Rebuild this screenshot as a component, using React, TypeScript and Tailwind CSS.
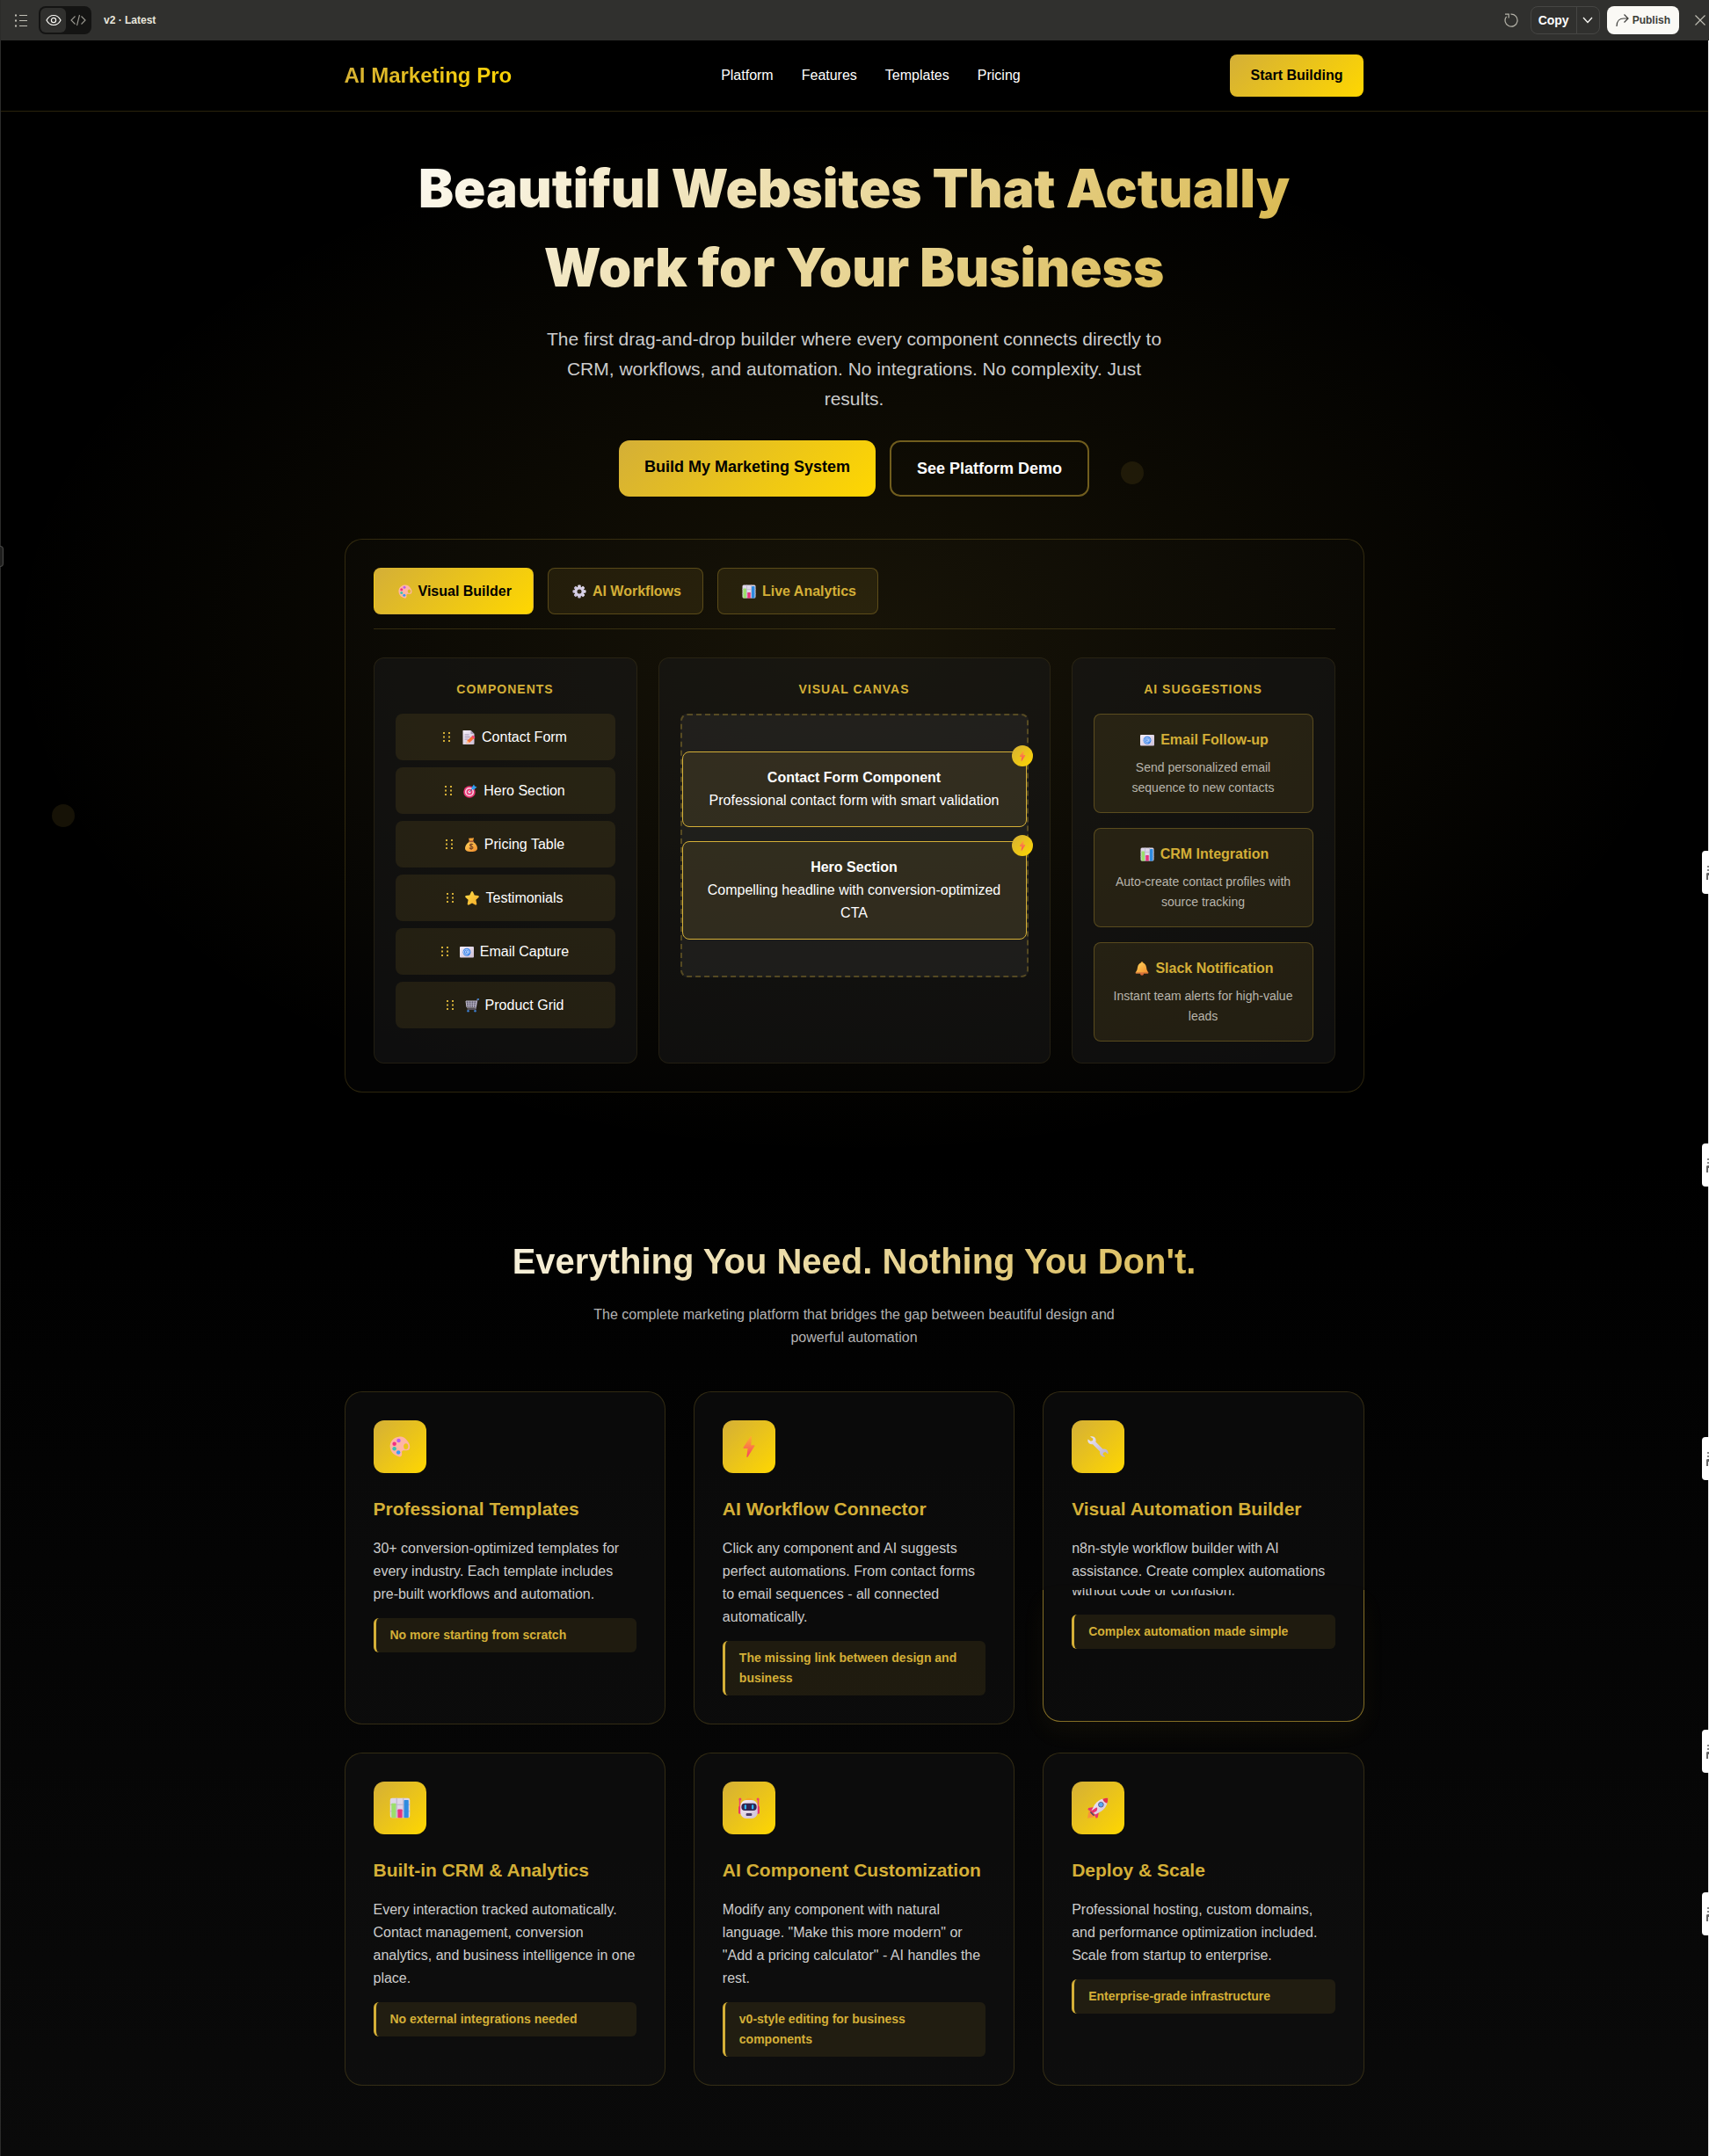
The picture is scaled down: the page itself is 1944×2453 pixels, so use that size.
import React from "react";

type IconProps = { className?: string };

function Defs() {
  return (
    <svg width="0" height="0" className="absolute" aria-hidden="true">
      <defs>
        <linearGradient id="bolt" x1="0" y1="0" x2="0" y2="1">
          <stop offset="0" stopColor="#ffb02e" />
          <stop offset="1" stopColor="#f8435f" />
        </linearGradient>
        <linearGradient id="paper" x1="0" y1="0" x2="1" y2="1">
          <stop offset="0" stopColor="#f5eef8" />
          <stop offset="1" stopColor="#cdbfd6" />
        </linearGradient>
        <linearGradient id="steel" x1="0" y1="0" x2="1" y2="1">
          <stop offset="0" stopColor="#ece6f5" />
          <stop offset="1" stopColor="#b9aecb" />
        </linearGradient>
        <linearGradient id="amber" x1="0" y1="0" x2="1" y2="1">
          <stop offset="0" stopColor="#ffd45c" />
          <stop offset="1" stopColor="#f28b2c" />
        </linearGradient>
        <linearGradient id="starfill" x1="0" y1="0" x2="1" y2="1">
          <stop offset="0" stopColor="#ffe04a" />
          <stop offset="1" stopColor="#f3a928" />
        </linearGradient>
      </defs>
    </svg>
  );
}

function Art({ className = "size-4", children }: IconProps & { children: React.ReactNode }) {
  return (
    <svg viewBox="0 0 32 32" className={className} aria-hidden="true" fill="none">
      {children}
    </svg>
  );
}

const Palette = (p: IconProps) => (
  <Art {...p}>
    <path
      fillRule="evenodd"
      d="M14 1C6 2 0 9 1 17c1 8 7 12 13 14 3 1 5-1 5-4 0-2-1-4 1-5 3-1 7 1 10-2 2-3 1-9-3-13C24 2 19 0 14 1Zm11 10c2 0 3.500 2 3.500 4.500S27 20 25 20s-3.500-2-3.500-4.500S23 11 25 11Z"
      fill="#ffb5a5"
    />
    <circle cx="14" cy="6.500" r="3" fill="#b95df0" />
    <circle cx="7.500" cy="11.500" r="3" fill="#f02f83" />
    <circle cx="7.500" cy="19" r="3" fill="#3cc3b0" />
    <circle cx="13.500" cy="24.500" r="3" fill="#3b9bf5" />
  </Art>
);

const Gear = (p: IconProps) => (
  <Art {...p}>
    <g fill="url(#steel)">
      {[0, 45, 90, 135].map((a) => (
        <rect key={a} x="12.500" y="1" width="7" height="30" rx="2" transform={`rotate(${a} 16 16)`} />
      ))}
    </g>
    <circle cx="16" cy="16" r="8" stroke="#d6cfe4" strokeWidth="6" />
    <circle cx="16" cy="16" r="5" fill="#332a1c" />
  </Art>
);

const Chart = (p: IconProps) => (
  <Art {...p}>
    <rect x="1" y="1" width="30" height="30" rx="3" fill="#ddd6e8" />
    <path d="M1 11h30M1 21h30M11 1v30M21 1v30" stroke="#beb4cf" strokeWidth="1.500" />
    <rect x="3" y="9" width="7" height="22" rx="1" fill="#9be06a" />
    <rect x="12.500" y="18" width="7" height="13" rx="1" fill="#e8337c" />
    <rect x="22" y="4" width="7" height="27" rx="1" fill="#2f8be0" />
  </Art>
);

const Memo = (p: IconProps) => (
  <Art {...p}>
    <path d="M4 0h17l8 8v22a2 2 0 0 1-2 2H4a1 1 0 0 1-1-1V1a1 1 0 0 1 1-1Z" fill="url(#paper)" />
    <path d="M21 0l8 8h-7a1 1 0 0 1-1-1V0Z" fill="#a99bb8" />
    <path d="M7 10h10M7 15h12M7 20h8" stroke="#a598b5" strokeWidth="2" />
    <path d="M13 23 25 12l5 5-12 11-7 2 2-7Z" fill="#fb6d33" />
    <path d="m13 23 5 5-7 2 2-7Z" fill="#ffcfa0" />
    <path d="m23 14 3-3 5 5-3 3-5-5Z" fill="#f0427d" />
  </Art>
);

const Dart = (p: IconProps) => (
  <Art {...p}>
    <circle cx="14" cy="18" r="13.500" fill="#e73572" />
    <circle cx="14" cy="18" r="10" fill="#f7d8e5" />
    <circle cx="14" cy="18" r="7" fill="#e73572" />
    <circle cx="14" cy="18" r="3.500" fill="#f7d8e5" />
    <path d="m14 18 11-11" stroke="#4f6a92" strokeWidth="2" />
    <path d="m19 8 5-7 2 4 5 2-7 6-5-1V8Z" fill="#2f9df0" />
  </Art>
);

const MoneyBag = (p: IconProps) => (
  <Art {...p}>
    <path d="M10 1c2 2 4-1 6 0s4-1 6 0l-2 7h-8l-2-7Z" fill="#f7a336" />
    <path d="M12 9h8c6 4 10 10 10 15s-4 8-14 8S2 29 2 24 6 13 12 9Z" fill="url(#amber)" />
    <rect x="10" y="7" width="12" height="3.500" rx="1.700" fill="#a3583a" />
    <path d="M20 16c-1-2-7-2-7 1 0 4 7 2 7 6 0 3-7 3-8 0M16 13v15" stroke="#7a4526" strokeWidth="2.200" />
  </Art>
);

const Star = (p: IconProps) => (
  <Art {...p}>
    <path
      d="M14 1.500c1-2 3-2 4 0l3.500 7.500 8 1c2.200.300 3 2.500 1.300 4l-6 5.500 1.700 9c.400 2-1.500 3.500-3.400 2.500L16 27l-7.100 4c-1.900 1-3.800-.500-3.400-2.500l1.700-9-6-5.500c-1.700-1.500-.900-3.700 1.300-4l8-1L14 1.500Z"
      fill="url(#starfill)"
    />
  </Art>
);

const Email = (p: IconProps) => (
  <Art {...p}>
    <rect x="0" y="4" width="32" height="25" rx="2" fill="url(#paper)" />
    <circle cx="16" cy="16.500" r="9" fill="#3f86e8" />
    <circle cx="15.500" cy="16.500" r="2.800" stroke="#cfe0ff" strokeWidth="1.800" />
    <path d="M18.500 13.500v4c0 3 4 1.500 3.500-2-.700-4-5-5.500-8.500-4.500-5 1.500-6 8-2 10.500 2.500 1.500 5 1 7 0" stroke="#cfe0ff" strokeWidth="1.600" />
  </Art>
);

const Cart = (p: IconProps) => (
  <Art {...p}>
    <path d="M31 2h-3l-4 22H5" stroke="#8d86a0" strokeWidth="2.200" />
    <path d="M28 2h4" stroke="#3e86d8" strokeWidth="3" />
    <path d="M2 6h24l-2 14H4L2 6Z" fill="#4a4656" stroke="#d3cde0" strokeWidth="1.800" />
    <path d="M3 10.500h22M3 15h22M8 6l1 14M14 6v14M20 6l-1 14" stroke="#d3cde0" strokeWidth="1.500" />
    <circle cx="7" cy="28.500" r="2.500" fill="#3e7fd0" />
    <circle cx="23" cy="28.500" r="2.500" fill="#3e7fd0" />
  </Art>
);

const Bell = (p: IconProps) => (
  <Art {...p}>
    <ellipse cx="16" cy="28" rx="4" ry="3.500" fill="#d8673a" />
    <circle cx="16" cy="3" r="2.500" fill="#f2a93c" />
    <path d="M16 3c6 0 9 4 10 10 .800 5 1.500 8 4 11 1 1.500.500 3-1 3H3c-1.500 0-2-1.500-1-3 2.500-3 3.200-6 4-11C7 7 10 3 16 3Z" fill="url(#amber)" />
    <path d="M1.500 25h29v2h-29z" fill="#c4653c" />
  </Art>
);

const Bolt = (p: IconProps) => (
  <Art {...p}>
    <path d="M18 .500 7.500 17c-.500 1 0 1.500.800 1.500H14L12.500 31c0 1 .800 1.300 1.400.500L24.500 15c.500-.900 0-1.500-.800-1.500H19L20 1c0-1-1.300-1.500-2-.500Z" fill="url(#bolt)" />
  </Art>
);

const Wrench = (p: IconProps) => (
  <Art {...p}>
    <path
      d="M4 .800c3-1.300 6.500-.300 8 2.500 1 2 1 3.700.500 5.200L23.500 19.500c2-.500 4-.200 5.700 1.200 2 1.700 2.700 4.200 2 6.500l-4-3.200-3 1-.800 3 3.600 3c-2.500.800-5.300 0-7-2.300-1.200-1.700-1.500-3.600-1-5.400L8 12.300c-2 .500-4 0-5.500-1.300C.700 9.300 0 7 .800 4.500l4.200 3 3-1 .500-3L4 .800Z"
      fill="url(#steel)"
    />
  </Art>
);

const Robot = (p: IconProps) => (
  <Art {...p}>
    <path d="M2 3v19M30 3v19" stroke="#f0436d" strokeWidth="2" />
    <circle cx="2.500" cy="2.500" r="2" fill="#f0436d" />
    <circle cx="29.500" cy="2.500" r="2" fill="#f0436d" />
    <path d="M10 5c0-3 3-4 6-4s6 1 6 4H10Z" fill="#f5a623" />
    <rect x="0" y="13" width="5" height="12" rx="2" fill="#e8386a" />
    <rect x="27" y="13" width="5" height="12" rx="2" fill="#e8386a" />
    <rect x="3" y="4" width="26" height="28" rx="9" fill="url(#paper)" />
    <rect x="4.500" y="9" width="23" height="11" rx="5" fill="#32244f" />
    <rect x="9" y="11" width="3" height="7" rx="1.500" fill="#2fb5ff" />
    <rect x="20" y="11" width="3" height="7" rx="1.500" fill="#2fb5ff" />
    <rect x="11.500" y="24" width="9" height="4" rx="1.500" fill="#4a3a66" />
  </Art>
);

const Rocket = (p: IconProps) => (
  <Art {...p}>
    <path d="M2 21 0 31.500 10 30l1-6-6-4-3 1Z" fill="#f9923a" />
    <path d="M8 15 1.500 16l-1 2.500L7 22l6-7H8ZM17 24l-1.500 6.500-2.500 1L10 25l7-6v5Z" fill="#e8336d" />
    <path d="M31 1C22 1 15 5 11 11l-5 9 6 6 9-5c6-4 10-11 10-20Z" fill="url(#paper)" />
    <path d="M31 1c-3 0-5.500.300-8 1.200 1 3.500 3.300 5.800 6.800 6.800C30.700 6.500 31 4 31 1Z" fill="#e8343f" />
    <circle cx="20.500" cy="11" r="3.800" fill="#5aa7f2" stroke="#5b5480" strokeWidth="1.200" />
    <path d="m14 15-9 6 3 3 6-3.500L15 17l-1-2Z" fill="#e8336d" />
    <path d="m5 21 6 6-2 1-5-5 1-2Z" fill="#553b6a" />
  </Art>
);

function Emoji({ icon: Icon }: { icon: React.FC<IconProps> }) {
  return (
    <span className="inline-flex w-[22px] shrink-0 justify-center">
      <Icon className="size-4" />
    </span>
  );
}

function Grip() {
  return (
    <svg viewBox="0 0 8 11" className="mr-1.5 h-[11px] w-2 shrink-0" fill="#d4af37" aria-hidden="true">
      {[0, 4.5, 9].map((y) => (
        <React.Fragment key={y}>
          <rect x="0" y={y} width="2" height="2" />
          <rect x="6" y={y} width="2" height="2" />
        </React.Fragment>
      ))}
    </svg>
  );
}

const gold = "bg-[linear-gradient(135deg,#d4af37,#ffd700)]";

function Toolbar() {
  return (
    <header className="flex h-[46px] items-center bg-[#30302e] pl-4 pr-1 text-[#faf9f5]">
      <button type="button" aria-label="Versions list" className="mr-3">
        <svg viewBox="0 0 16 16" className="size-4" stroke="#c2c0b6" aria-hidden="true">
          <path d="M6 2.500h9M6 8.500h9M6 14.500h9" />
          <path d="M1 2.500h2M1 8.500h2M1 14.500h2" strokeWidth="2" />
        </svg>
      </button>
      <div className="flex h-8 w-[60px] items-center rounded-lg bg-[#141413] p-0.5">
        <button type="button" aria-label="Preview" className="flex h-7 w-[29px] items-center justify-center rounded-md bg-[#30302e]">
          <svg viewBox="0 0 18 14" className="h-3.5 w-[18px]" fill="none" stroke="#faf9f5" strokeWidth="1.200" aria-hidden="true">
            <path d="M1 7c2-4 5-5.500 8-5.500S15 3 17 7c-2 4-5 5.500-8 5.500S3 11 1 7Z" />
            <circle cx="9" cy="7" r="2.600" />
          </svg>
        </button>
        <button type="button" aria-label="Code" className="flex h-7 flex-1 items-center justify-center">
          <svg viewBox="0 0 18 14" className="h-3.5 w-[18px]" fill="none" stroke="#9c9a92" strokeWidth="1.100" aria-hidden="true">
            <path d="M5.500 2.500 1 7l4.500 4.500M12.500 2.500 17 7l-4.500 4.500M10.500 1l-3 12" />
          </svg>
        </button>
      </div>
      <span className="ml-3.5 text-xs font-bold text-[#e8e6dc]">v2 · Latest</span>
      <div className="ml-auto flex items-center">
        <button type="button" aria-label="Refresh" className="mr-3.5">
          <svg viewBox="0 0 16 16" className="size-4" fill="none" stroke="#b5b3a9" strokeWidth="1.200" aria-hidden="true">
            <path d="M7.500 1.200A7 7 0 1 1 2.600 3.800M1 1.200h4.200v4.300" />
          </svg>
        </button>
        <div className="flex h-8 items-stretch rounded-lg border border-[#464644]">
          <button type="button" className="px-2 text-sm font-bold text-white">Copy</button>
          <button type="button" aria-label="Copy options" className="flex w-[26px] items-center justify-center border-l border-[#464644]">
            <svg viewBox="0 0 12 8" className="h-2 w-3" fill="none" stroke="#faf9f5" strokeWidth="1.300" aria-hidden="true">
              <path d="m1 1 5 5.500L11 1" />
            </svg>
          </button>
        </div>
        <button type="button" className="ml-2 flex h-8 items-center gap-1 rounded-lg bg-[#faf9f5] px-2.5 text-xs font-bold text-[#3d3d3a]">
          <svg viewBox="0 0 15 16" className="h-4 w-[15px]" fill="none" stroke="#3d3d3a" strokeWidth="1.200" aria-hidden="true">
            <path d="M1 15c0-6 3.500-9 8-9h4.500M9.500 1.500 14 6l-4.500 4.500" />
          </svg>
          Publish
        </button>
        <button type="button" aria-label="Close" className="ml-[18px]">
          <svg viewBox="0 0 12 12" className="size-3" stroke="#c2c0b6" strokeWidth="1.100" aria-hidden="true">
            <path d="m.500.500 11 11M11.500.500l-11 11" />
          </svg>
        </button>
      </div>
    </header>
  );
}

function SiteNav() {
  return (
    <nav className="border-b border-[#d4af37]/20 bg-black py-4">
      <div className="mx-auto flex max-w-[1200px] items-center justify-between px-5">
        <span className="bg-[linear-gradient(135deg,#d4af37,#ffd700)] bg-clip-text text-2xl font-bold text-transparent">AI Marketing Pro</span>
        <ul className="flex gap-8">
          {["Platform", "Features", "Templates", "Pricing"].map((l) => (
            <li key={l}>
              <a href="#" className="text-white">{l}</a>
            </li>
          ))}
        </ul>
        <button type="button" className={`h-12 rounded-lg px-6 font-bold text-black ${gold}`}>Start Building</button>
      </div>
    </nav>
  );
}

const components: [React.FC<IconProps>, string][] = [
  [Memo, "Contact Form"],
  [Dart, "Hero Section"],
  [MoneyBag, "Pricing Table"],
  [Star, "Testimonials"],
  [Email, "Email Capture"],
  [Cart, "Product Grid"],
];

const suggestions: [React.FC<IconProps>, string, string][] = [
  [Email, "Email Follow-up", "Send personalized email sequence to new contacts"],
  [Chart, "CRM Integration", "Auto-create contact profiles with source tracking"],
  [Bell, "Slack Notification", "Instant team alerts for high-value leads"],
];

const canvasItems = [
  ["Contact Form Component", "Professional contact form with smart validation"],
  ["Hero Section", "Compelling headline with conversion-optimized CTA"],
];

function Column({ title, children }: { title: string; children: React.ReactNode }) {
  return (
    <section className="rounded-xl border border-[#d4af37]/10 bg-[#1a1a1a]/50 p-6 text-center">
      <h3 className="mb-4 text-sm leading-[23px] font-bold tracking-[1px] text-[#d4af37] uppercase">{title}</h3>
      {children}
    </section>
  );
}

function Demo() {
  const idle = "border-[#d4af37]/30 bg-[#d4af37]/10 text-[#d4af37]";
  const tabs: [React.FC<IconProps>, string, string][] = [
    [Palette, "Visual Builder", `border-[#d4af37]/30 text-black ${gold}`],
    [Gear, "AI Workflows", idle],
    [Chart, "Live Analytics", idle],
  ];
  return (
    <div className="mt-12 rounded-[20px] border border-[#d4af37]/20 bg-white/[0.01] p-8">
      <div className="mb-8 flex gap-4 border-b border-[#d4af37]/20 pb-4">
        {tabs.map(([icon, label, tone]) => (
          <button key={label} type="button" className={`flex h-[53px] items-center gap-1 rounded-lg border px-6 font-bold ${tone}`}>
            <Emoji icon={icon} />
            {label}
          </button>
        ))}
      </div>
      <div className="grid grid-cols-[300px_1fr_300px] gap-6">
        <Column title="Components">
          <ul className="flex flex-col gap-2">
            {components.map(([icon, label]) => (
              <li key={label} className="flex h-[53px] items-center justify-center gap-1 rounded-lg bg-[#d4af37]/10 text-white">
                <Grip />
                <Emoji icon={icon} />
                {label}
              </li>
            ))}
          </ul>
        </Column>
        <Column title="Visual Canvas">
          <div className="flex min-h-[300px] flex-col items-center justify-center gap-4 rounded-lg border-2 border-dashed border-[#d4af37]/30 bg-white/5">
            {canvasItems.map(([title, text]) => (
              <div key={title} className="relative w-full rounded-lg border border-[#d4af37] bg-[#d4af37]/10 p-4 leading-[26px] text-white">
                <span className={`absolute -top-2 -right-2 flex size-6 items-center justify-center rounded-full ${gold}`}>
                  <Bolt className="size-3" />
                </span>
                <strong className="block">{title}</strong>
                <p>{text}</p>
              </div>
            ))}
          </div>
        </Column>
        <Column title="AI Suggestions">
          <div className="flex flex-col gap-[17px]">
            {suggestions.map(([icon, title, text]) => (
              <article key={title} className="rounded-lg border border-[#d4af37]/30 bg-[#d4af37]/10 p-4">
                <h4 className="mb-2 flex items-center justify-center gap-1 leading-[25px] font-bold text-[#d4af37]">
                  <Emoji icon={icon} />
                  {title}
                </h4>
                <p className="text-sm leading-[23px] text-[#b8b5ac]">{text}</p>
              </article>
            ))}
          </div>
        </Column>
      </div>
    </div>
  );
}

function Hero() {
  return (
    <section className="relative bg-[radial-gradient(ellipse_at_center,rgba(212,175,55,0.1)_0%,transparent_70%)] pt-[42px] pb-20">
      <span className="absolute top-[398px] left-[1275px] size-[26px] rounded-full bg-[#d4af37]/10" />
      <span className="absolute top-[788px] left-[59px] size-[26px] rounded-full bg-[#d4af37]/10" />
      <div className="mx-auto max-w-[1200px] px-5">
        <h1 className="bg-[linear-gradient(135deg,#fff,#d4af37)] bg-clip-text text-center font-[Inter] text-[60px] leading-[90px] font-black text-transparent">
          Beautiful Websites That Actually
          <br />
          Work for Your Business
        </h1>
        <p className="mx-auto mt-5 max-w-[700px] text-center text-[21px] leading-[34px] text-[#cccccc]">
          The first drag-and-drop builder where every component connects directly to CRM, workflows, and automation. No integrations. No complexity. Just results.
        </p>
        <div className="mt-[30px] flex justify-center gap-4 text-lg font-bold">
          <button type="button" className={`h-16 rounded-xl px-[29px] pb-1 text-black ${gold}`}>Build My Marketing System</button>
          <button type="button" className="h-16 rounded-xl border-2 border-[#d4af37]/50 px-[29px] text-white">See Platform Demo</button>
        </div>
        <Demo />
      </div>
    </section>
  );
}

type Feature = { icon: React.FC<IconProps>; title: string; text: React.ReactNode; note: string; active?: boolean };

const lastLine = "without code or confusion.";

const features: Feature[] = [
  { icon: Palette, title: "Professional Templates", text: "30+ conversion-optimized templates for every industry. Each template includes pre-built workflows and automation.", note: "No more starting from scratch" },
  { icon: Bolt, title: "AI Workflow Connector", text: "Click any component and AI suggests perfect automations. From contact forms to email sequences - all connected automatically.", note: "The missing link between design and business" },
  {
    icon: Wrench,
    title: "Visual Automation Builder",
    text: (
      <>
        n8n-style workflow builder with AI assistance. Create complex automations
        <span className="block h-2 overflow-hidden">{lastLine}</span>
        <span className="flex h-3.5 items-end overflow-hidden" aria-hidden="true">{lastLine}</span>
      </>
    ),
    note: "Complex automation made simple",
    active: true,
  },
  { icon: Chart, title: "Built-in CRM & Analytics", text: "Every interaction tracked automatically. Contact management, conversion analytics, and business intelligence in one place.", note: "No external integrations needed" },
  { icon: Robot, title: "AI Component Customization", text: "Modify any component with natural language. \"Make this more modern\" or \"Add a pricing calculator\" - AI handles the rest.", note: "v0-style editing for business components" },
  { icon: Rocket, title: "Deploy & Scale", text: "Professional hosting, custom domains, and performance optimization included. Scale from startup to enterprise.", note: "Enterprise-grade infrastructure" },
];

function FeatureCard({ icon: Icon, title, text, note, active }: Feature) {
  return (
    <article
      className={
        active
          ? "relative mb-[3px] rounded-[20px] border border-transparent bg-[#111111]/50 p-8"
          : "rounded-[20px] border border-[#d4af37]/20 bg-[#111111]/50 p-8"
      }
    >
      {active && (
        <div className="pointer-events-none absolute -inset-px flex flex-col">
          <div className="h-[226px] rounded-t-[20px] border-x border-t border-[#d4af37]/20" />
          <div className="flex-1 rounded-b-[20px] border-x border-b border-[#d4af37]/60 shadow-[0_12px_28px_rgba(212,175,55,0.05)]" />
        </div>
      )}
      <div className={`mb-6 flex size-[60px] items-center justify-center rounded-xl ${gold}`}>
        <Icon className="size-6" />
      </div>
      <h3 className="mb-4 text-[21px] leading-[33px] font-bold text-[#d4af37]">{title}</h3>
      <p className="mb-3.5 leading-[26px] text-[#cccccc]">{text}</p>
      <p className="rounded-md border-l-[3px] border-[#d4af37] bg-[#d4af37]/10 px-4 py-2 text-sm leading-[23px] font-bold text-[#d4af37]">{note}</p>
    </article>
  );
}

function Features() {
  return (
    <section className="bg-[linear-gradient(180deg,#000,#0a0a0a)] py-20">
      <div className="mx-auto max-w-[1200px] px-5">
        <h2 className="bg-[linear-gradient(135deg,#fff,#d4af37)] bg-clip-text text-center text-[40px] leading-[64px] font-bold text-transparent">
          Everything You Need. Nothing You Don't.
        </h2>
        <p className="mx-auto mt-4 mb-12 max-w-[600px] text-center leading-[26px] text-[#b3b3b3]">
          The complete marketing platform that bridges the gap between beautiful design and powerful automation
        </p>
        <div className="grid grid-cols-3 gap-8">
          {features.map((f) => (
            <FeatureCard key={f.title} {...f} />
          ))}
        </div>
      </div>
    </section>
  );
}

function EdgeTab({ place }: { place: string }) {
  return (
    <button type="button" aria-label="Open side note" className={`absolute right-0 flex h-[49px] w-2 items-center justify-end rounded-l bg-white ${place}`}>
      <svg viewBox="0 0 3 16" className="h-4 w-[3px]" fill="#8a8a8a" aria-hidden="true">
        <rect x="1" y="0" width="2" height="2" />
        <rect x="1" y="4" width="2" height="2" />
        <path d="M0 9c0-1 1-1 3-1v3H2v5H0V9Z" fill="#666" />
      </svg>
    </button>
  );
}

export default function App() {
  return (
    <div className="relative min-h-screen overflow-hidden bg-black font-['Liberation_Sans',Arial,sans-serif] text-base">
      <Defs />
      <Toolbar />
      <main className="border-r border-[#e5e5e5]">
        <SiteNav />
        <Hero />
        <Features />
      </main>
      <span className="pointer-events-none absolute inset-y-0 left-0 w-px bg-[#2b2b2a]" />
      <button type="button" aria-label="Expand panel" className="absolute top-[621px] left-0 h-6 w-1 rounded-r border border-l-0 border-[#4a4a48] bg-[#1f1f1e]" />
      <EdgeTab place="top-[968px]" />
      <EdgeTab place="top-[1301px]" />
      <EdgeTab place="top-[1635px]" />
      <EdgeTab place="top-[1968px]" />
      <EdgeTab place="top-[2153px]" />
    </div>
  );
}
